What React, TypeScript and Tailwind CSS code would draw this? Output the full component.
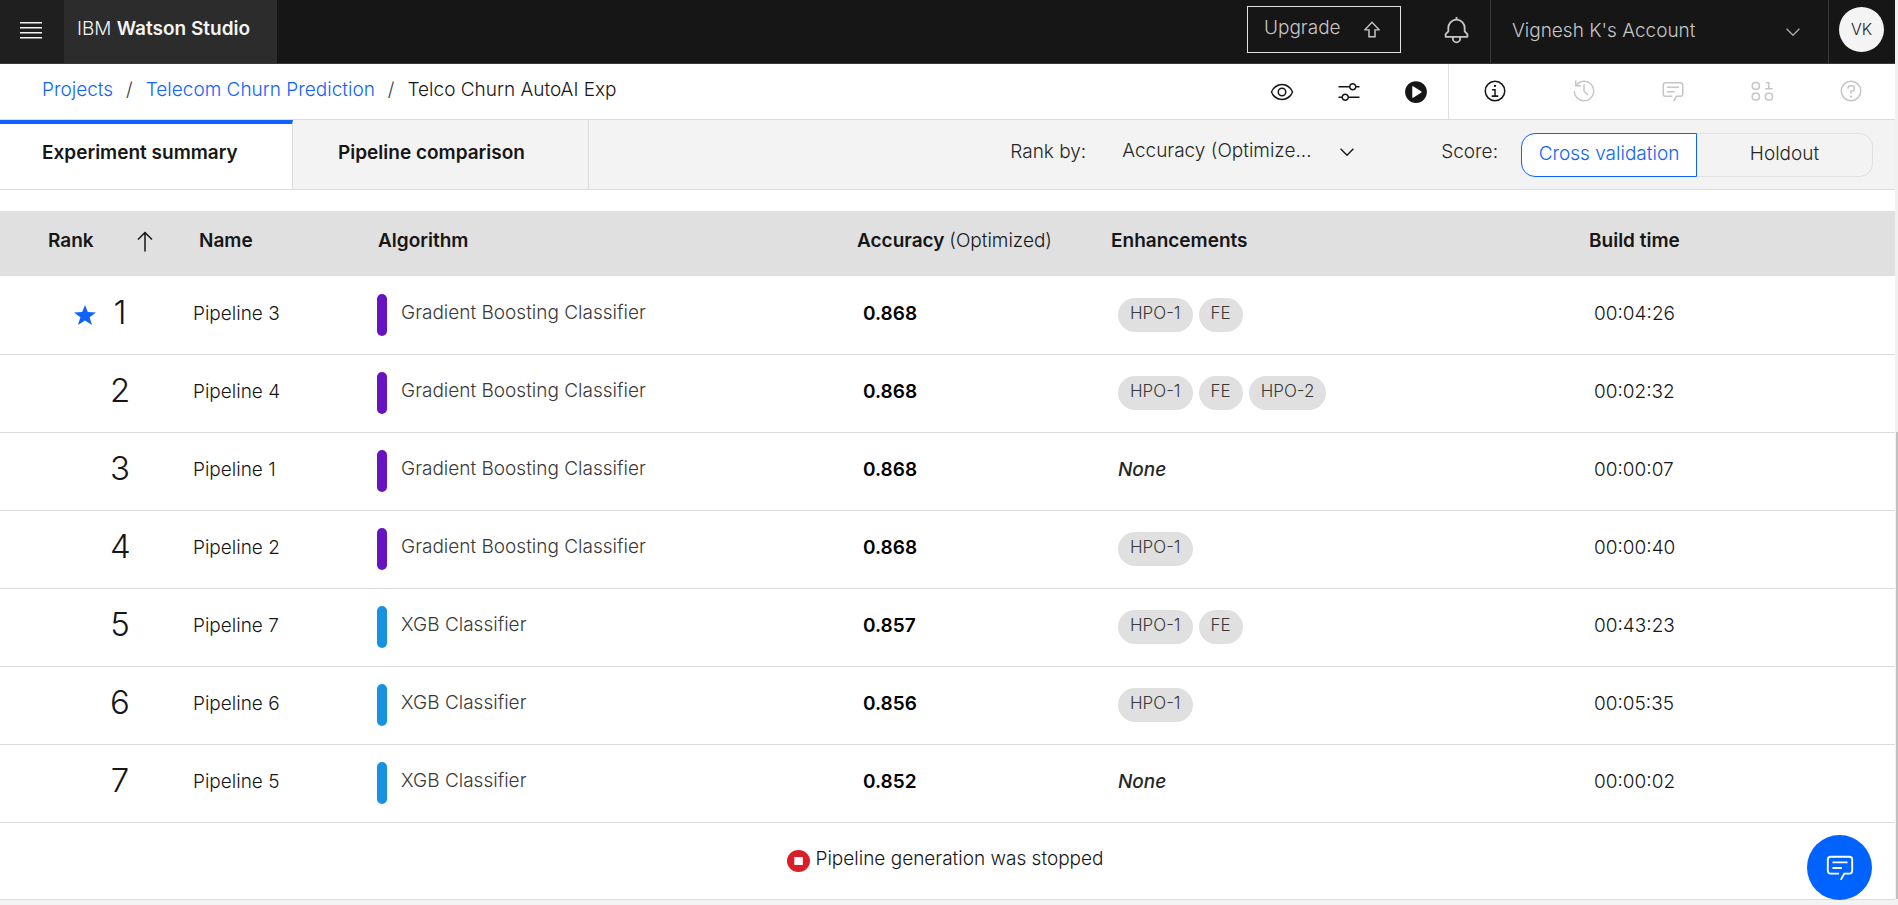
import type { ReactNode } from "react";

type Enhancement = "HPO-1" | "FE" | "HPO-2";
type Pipeline = {
  rank: number;
  name: string;
  algorithm: string;
  accuracy: string;
  enhancements: Enhancement[];
  time: string;
};

const GB = "Gradient Boosting Classifier";
const XGB = "XGB Classifier";

const pipelines: Pipeline[] = [
  { rank: 1, name: "Pipeline 3", algorithm: GB, accuracy: "0.868", enhancements: ["HPO-1", "FE"], time: "00:04:26" },
  { rank: 2, name: "Pipeline 4", algorithm: GB, accuracy: "0.868", enhancements: ["HPO-1", "FE", "HPO-2"], time: "00:02:32" },
  { rank: 3, name: "Pipeline 1", algorithm: GB, accuracy: "0.868", enhancements: [], time: "00:00:07" },
  { rank: 4, name: "Pipeline 2", algorithm: GB, accuracy: "0.868", enhancements: ["HPO-1"], time: "00:00:40" },
  { rank: 5, name: "Pipeline 7", algorithm: XGB, accuracy: "0.857", enhancements: ["HPO-1", "FE"], time: "00:43:23" },
  { rank: 6, name: "Pipeline 6", algorithm: XGB, accuracy: "0.856", enhancements: ["HPO-1"], time: "00:05:35" },
  { rank: 7, name: "Pipeline 5", algorithm: XGB, accuracy: "0.852", enhancements: [], time: "00:00:02" },
];

function Icon({ className, children }: { className: string; children: ReactNode }) {
  return (
    <svg viewBox="0 0 32 32" fill="currentColor" aria-hidden="true" className={"shrink-0 " + className}>
      {children}
    </svg>
  );
}

function ChevronIcon({ className }: { className: string }) {
  return (
    <Icon className={className}>
      <path d="M16 22 6 12l1.4-1.4 8.6 8.6 8.6-8.6L26 12z" />
    </Icon>
  );
}

function ChatPaths() {
  return (
    <>
      <path d="M17.74 30 16 29l4-7h6a2 2 0 0 0 2-2V8a2 2 0 0 0-2-2H6a2 2 0 0 0-2 2v12a2 2 0 0 0 2 2h9v2H6a4 4 0 0 1-4-4V8a4 4 0 0 1 4-4h20a4 4 0 0 1 4 4v12a4 4 0 0 1-4 4h-4.84Z" />
      <path d="M8 10h16v2H8zM8 16h10v2H8z" />
    </>
  );
}

function TopBar() {
  return (
    <header className="flex h-16 border-b border-[#393939] bg-[#161616] text-[19px] font-light text-[#c6c6c6]">
      <button type="button" aria-label="Menu" className="flex w-16 items-center justify-center bg-[#1f1f1f] pr-[2px] pb-[3px] text-[#f4f4f4]">
        <svg viewBox="0 0 22 20" fill="currentColor" className="h-5 w-[22px]" aria-hidden="true">
          <path d="M0 2h22v1.4H0zM0 7h22v1.4H0zM0 12h22v1.4H0zM0 17h22v1.4H0z" />
        </svg>
      </button>
      <a href="#home" className="flex w-[213px] items-center bg-[#2c2c2c] pb-1 pl-[13px] text-[#f4f4f4]">
        <span>
          IBM <span className="font-semibold">Watson Studio</span>
        </span>
      </a>
      <div className="ml-auto flex">
        <button type="button" className="mt-[6px] flex h-[47px] w-[154px] items-center justify-between border border-[#e0e0e0] pr-4 pl-4">
          <span className="pb-[2px]">Upgrade</span>
          <Icon className="h-6 w-6">
            <path d="M16 4.2 5.6 15.2l-.2 1.6H11V26h10v-9.2h5.6l-.2-1.6ZM16 6.9l7.6 8H19V24h-6v-9.1H8.4Z" />
          </Icon>
        </button>
        <button type="button" aria-label="Notifications" className="flex w-[89px] items-center justify-center pb-[2px] pl-[22px]">
          <Icon className="h-[29px] w-[29px]">
            <path d="M28.71 19.29 26 16.59V13A10 10 0 0 0 17 3.05V1h-2v2.05A10 10 0 0 0 6 13v3.59l-2.71 2.7A1 1 0 0 0 3 20v3a1 1 0 0 0 1 1h7v1a5 5 0 0 0 10 0v-1h7a1 1 0 0 0 1-1v-3a1 1 0 0 0-.29-.71ZM19 25a3 3 0 0 1-6 0v-1h6Zm8-3H5v-1.59l2.71-2.7A1 1 0 0 0 8 17v-4a8 8 0 0 1 16 0v4a1 1 0 0 0 .29.71l2.71 2.7Z" />
          </Icon>
        </button>
        <button type="button" className="flex w-[339px] items-center justify-between border-x border-[#393939] pr-6 pl-[21px]">
          Vignesh K's Account
          <ChevronIcon className="h-[22px] w-[22px] text-[#a8a8a8]" />
        </button>
        <button type="button" className="mr-[11px] ml-[10px] mt-[7px] flex h-[45px] w-[45px] items-center justify-center rounded-full bg-[#f4f4f4] pb-[2px] text-base text-[#262626]">
          VK
        </button>
      </div>
    </header>
  );
}

function Toolbar() {
  return (
    <div className="flex h-14 items-stretch justify-between border-b border-[#dcdcdc] bg-white">
      <nav aria-label="Breadcrumb" className="flex items-center gap-[13px] pb-[2px] pl-[42px] text-[19px] font-light text-[#0f62fe]">
        <a href="#projects">Projects</a>
        <span className="text-[#393939]">/</span>
        <a href="#telecom">Telecom Churn Prediction</a>
        <span className="text-[#393939]">/</span>
        <span className="text-[#161616]">Telco Churn AutoAI Exp</span>
      </nav>
      <div className="flex text-[#161616]">
        <div className="flex items-center gap-[43px] border-r border-[#e0e0e0] pr-5">
          <button type="button" aria-label="Preview">
            <Icon className="h-6 w-6">
              <path d="M30.94 15.66A16.69 16.69 0 0 0 16 5 16.69 16.69 0 0 0 1.06 15.66a1 1 0 0 0 0 .68A16.69 16.69 0 0 0 16 27a16.69 16.69 0 0 0 14.94-10.66 1 1 0 0 0 0-.68ZM16 25c-5.3 0-10.9-3.93-12.93-9C5.1 10.93 10.7 7 16 7s10.9 3.93 12.93 9C26.9 21.07 21.3 25 16 25Z" />
              <path d="M16 10a6 6 0 1 0 6 6 6 6 0 0 0-6-6Zm0 10a4 4 0 1 1 4-4 4 4 0 0 1-4 4Z" />
            </Icon>
          </button>
          <button type="button" aria-label="Settings">
            <Icon className="h-6 w-6">
              <path d="M30 8h-4.1c-.5-2.3-2.5-4-4.9-4s-4.4 1.7-4.9 4H2v2h14.1c.5 2.3 2.5 4 4.9 4s4.4-1.7 4.9-4H30V8zm-9 4c-1.7 0-3-1.3-3-3s1.3-3 3-3 3 1.3 3 3-1.3 3-3 3zM2 24h4.1c.5 2.3 2.5 4 4.9 4s4.4-1.7 4.9-4H30v-2H15.9c-.5-2.3-2.5-4-4.9-4s-4.4 1.7-4.9 4H2v2zm9-4c1.7 0 3 1.3 3 3s-1.3 3-3 3-3-1.3-3-3 1.3-3 3-3z" />
            </Icon>
          </button>
          <button type="button" aria-label="Run">
            <Icon className="h-6 w-6">
              <path fillRule="evenodd" d="M16 1.5a14.5 14.5 0 1 0 0 29 14.5 14.5 0 0 0 0-29ZM11 23V9a.8.8 0 0 1 1.2-.7l11 7a.8.8 0 0 1 0 1.4l-11 7A.8.8 0 0 1 11 23Z" />
            </Icon>
          </button>
        </div>
        <div className="flex items-center gap-[65px] pr-8 pb-[2px] pl-[34px] text-[#c6c6c6]">
          <button type="button" aria-label="Information" className="text-[#161616]">
            <Icon className="h-6 w-6">
              <path d="M16 2a14 14 0 1 0 0 28 14 14 0 0 0 0-28Zm0 26a12 12 0 1 1 0-24 12 12 0 0 1 0 24Z" />
              <path d="M17 21.8v-8.6h-5v2.1h3v6.5h-3.4V24h8.8v-2.2zM16 7.5a1.6 1.6 0 1 0 0 3.2 1.6 1.6 0 0 0 0-3.2Z" />
            </Icon>
          </button>
          <button type="button" aria-label="History">
            <Icon className="h-6 w-6">
              <path d="M20.59 22 15 16.41V7h2v8.58l5 5.01ZM16 2A13.94 13.94 0 0 0 6 6.23V2H4v8h8V8H7.08A12 12 0 1 1 4 16H2A14 14 0 1 0 16 2Z" />
            </Icon>
          </button>
          <button type="button" aria-label="Comments">
            <Icon className="h-6 w-6">
              <ChatPaths />
            </Icon>
          </button>
          <button type="button" aria-label="Data">
            <Icon className="h-6 w-6">
              <path d="M24 12V5.8h-3V4h5v8h4v2h-9.6v-2z" />
              <g fill="none" stroke="currentColor" strokeWidth="2">
                <rect x="3" y="4.5" width="9.5" height="9" rx="4" />
                <rect x="3" y="19" width="9.5" height="9" rx="4" />
                <rect x="20.5" y="19" width="9.5" height="9" rx="4" />
              </g>
            </Icon>
          </button>
          <button type="button" aria-label="Help">
            <Icon className="h-6 w-6">
              <path d="M16 2a14 14 0 1 0 0 28 14 14 0 0 0 0-28Zm0 26a12 12 0 1 1 0-24 12 12 0 0 1 0 24Z" />
              <circle cx="16" cy="23.5" r="1.5" />
              <path d="M17 8h-1.5a4.49 4.49 0 0 0-4.5 4.5v.5h2v-.5a2.5 2.5 0 0 1 2.5-2.5H17a2.5 2.5 0 0 1 0 5h-2v4.5h2V17a4.5 4.5 0 0 0 0-9Z" />
            </Icon>
          </button>
        </div>
      </div>
    </div>
  );
}

function ViewBar() {
  return (
    <div className="flex h-[70px] items-stretch justify-between border-b border-[#dcdcdc] bg-[#f3f3f3] text-[19px]">
      <div role="tablist" className="flex font-semibold text-[#161616]">
        <button type="button" role="tab" aria-selected="true" className="w-[293px] border-t-4 border-r border-t-[#0f62fe] border-r-[#dcdcdc] bg-white pb-[6px] pl-[42px] text-left">
          Experiment summary
        </button>
        <button type="button" role="tab" aria-selected="false" className="w-[296px] border-r border-[#dcdcdc] pb-[2px] pl-[45px] text-left">
          Pipeline comparison
        </button>
      </div>
      <div className="flex items-center pr-[22px] font-light text-[#262626]">
        <label htmlFor="rank-by" className="pb-1">
          Rank by:
        </label>
        <div className="ml-9 flex w-[236px] items-center justify-between pb-[6px]">
          <select id="rank-by" className="w-[204px] cursor-pointer appearance-none bg-transparent">
            <option>Accuracy (Optimize...</option>
          </select>
          <ChevronIcon className="pointer-events-none h-[22px] w-[22px] text-[#161616]" />
        </div>
        <span id="score" className="ml-[83px] pb-1">
          Score:
        </span>
        <div role="group" aria-labelledby="score" className="ml-[23px] flex h-11">
          <button type="button" aria-pressed="true" className="w-[176px] rounded-l-[14px] border border-[#0f62fe] bg-white text-[#0f62fe]">
            Cross validation
          </button>
          <button type="button" aria-pressed="false" className="w-[176px] rounded-r-[14px] border border-l-0 border-[#e0e0e0]">
            Holdout
          </button>
        </div>
      </div>
    </div>
  );
}

function Leaderboard() {
  return (
    <table className="mt-[21px] w-full table-fixed text-left text-[19px] font-light text-[#161616]">
      <colgroup>
        <col className="w-[185px]" />
        <col className="w-[185px]" />
        <col className="w-[479px]" />
        <col className="w-[254px]" />
        <col className="w-[478px]" />
        <col className="w-[314px]" />
      </colgroup>
      <thead>
        <tr className="h-[65px] bg-[#e0e0e0]">
          <th className="pb-1 pl-12 font-semibold">
            <span className="flex items-center gap-[42px]">
              Rank
              <svg viewBox="0 0 18 22" fill="none" stroke="currentColor" strokeWidth="1.5" className="h-[22px] w-[18px]" aria-hidden="true">
                <path d="M9 20.5V1.5M2 8.5l7-7 7 7" />
              </svg>
            </span>
          </th>
          <th className="pb-1 pl-[14px] font-semibold">Name</th>
          <th className="pb-1 pl-2 font-semibold">Algorithm</th>
          <th className="pb-1 pl-2 font-semibold whitespace-nowrap">
            Accuracy <span className="font-light">(Optimized)</span>
          </th>
          <th className="pb-1 pl-2 font-semibold">Enhancements</th>
          <th className="pb-1 pl-2 font-semibold">Build time</th>
        </tr>
      </thead>
      <tbody>
        {pipelines.map((p) => (
          <tr key={p.rank} className="h-[78px] border-b border-[#dcdcdc]">
            <td className="pr-[55px]">
              <span className="flex items-center justify-end gap-[14px]">
                {p.rank === 1 && (
                  <svg viewBox="0 0 22 20" className="h-5 w-[22px] text-[#0f62fe]" fill="currentColor" role="img" aria-label="Best pipeline">
                    <path d="M11 0l2.8 7.1 8.2.4-6.4 4.8L18 20l-7-4.5L4 20l2.4-7.7L0 7.5l8.2-.4z" />
                  </svg>
                )}
                <span className="w-5 pb-[6px] text-center text-[33px] leading-10">{p.rank}</span>
              </span>
            </td>
            <td className="pb-[2px] pl-2">{p.name}</td>
            <td className="pl-[7px]">
              <span className="flex items-center gap-[14px]">
                <span className={"h-[42px] w-[10px] rounded-full " + (p.algorithm === GB ? "bg-[#6614c2]" : "bg-[#1991e3]")} />
                <span className="pb-1 text-[#393939]">{p.algorithm}</span>
              </span>
            </td>
            <td className="pb-[2px] pl-[14px] font-semibold text-black">{p.accuracy}</td>
            <td className="pl-[15px]">
              {p.enhancements.length === 0 ? (
                <em className="block pb-[2px] font-medium text-[#262626]">None</em>
              ) : (
                <span className="flex gap-[6px]">
                  {p.enhancements.map((e) => (
                    <span key={e} className="flex h-[34px] items-center rounded-full bg-[#e0e0e0] px-3 pb-[3px] text-[17px] text-[#393939]">
                      {e}
                    </span>
                  ))}
                </span>
              )}
            </td>
            <td className="pb-[2px] pl-[13px]">{p.time}</td>
          </tr>
        ))}
      </tbody>
    </table>
  );
}

export default function App() {
  return (
    <div className="flex min-h-screen bg-[#f3f3f3] font-['Inter','Noto_Sans',sans-serif]">
      <div className="min-w-0 flex-1">
        <TopBar />
        <Toolbar />
        <ViewBar />
        <main className="flow-root bg-white">
          <Leaderboard />
          <p className="flex h-[77px] items-center justify-center gap-[5px] border-b border-[#dcdcdc] pr-1 text-[19px] font-light text-[#161616]">
            <svg viewBox="0 0 23 22" className="h-[22px] w-[23px]" aria-hidden="true">
              <ellipse cx="11.5" cy="11" rx="11.5" ry="11" fill="#da1e28" />
              <rect x="7.3" y="7" width="8.5" height="8" fill="#fff" />
            </svg>
            <span className="pb-[2px]">Pipeline generation was stopped</span>
          </p>
        </main>
      </div>
      <div className="w-[3px] bg-[#f1f1f1] pt-[432px] pb-[6px] pl-px">
        <div className="h-full bg-[#c1c1c1]" />
      </div>
      <button
        type="button"
        aria-label="Open chat"
        className="fixed right-[26px] bottom-[5px] flex h-[65px] w-[65px] items-center justify-center rounded-full bg-[#0062ff] pb-[2px] text-white"
      >
        <Icon className="h-[30px] w-[30px]">
          <ChatPaths />
        </Icon>
      </button>
    </div>
  );
}
